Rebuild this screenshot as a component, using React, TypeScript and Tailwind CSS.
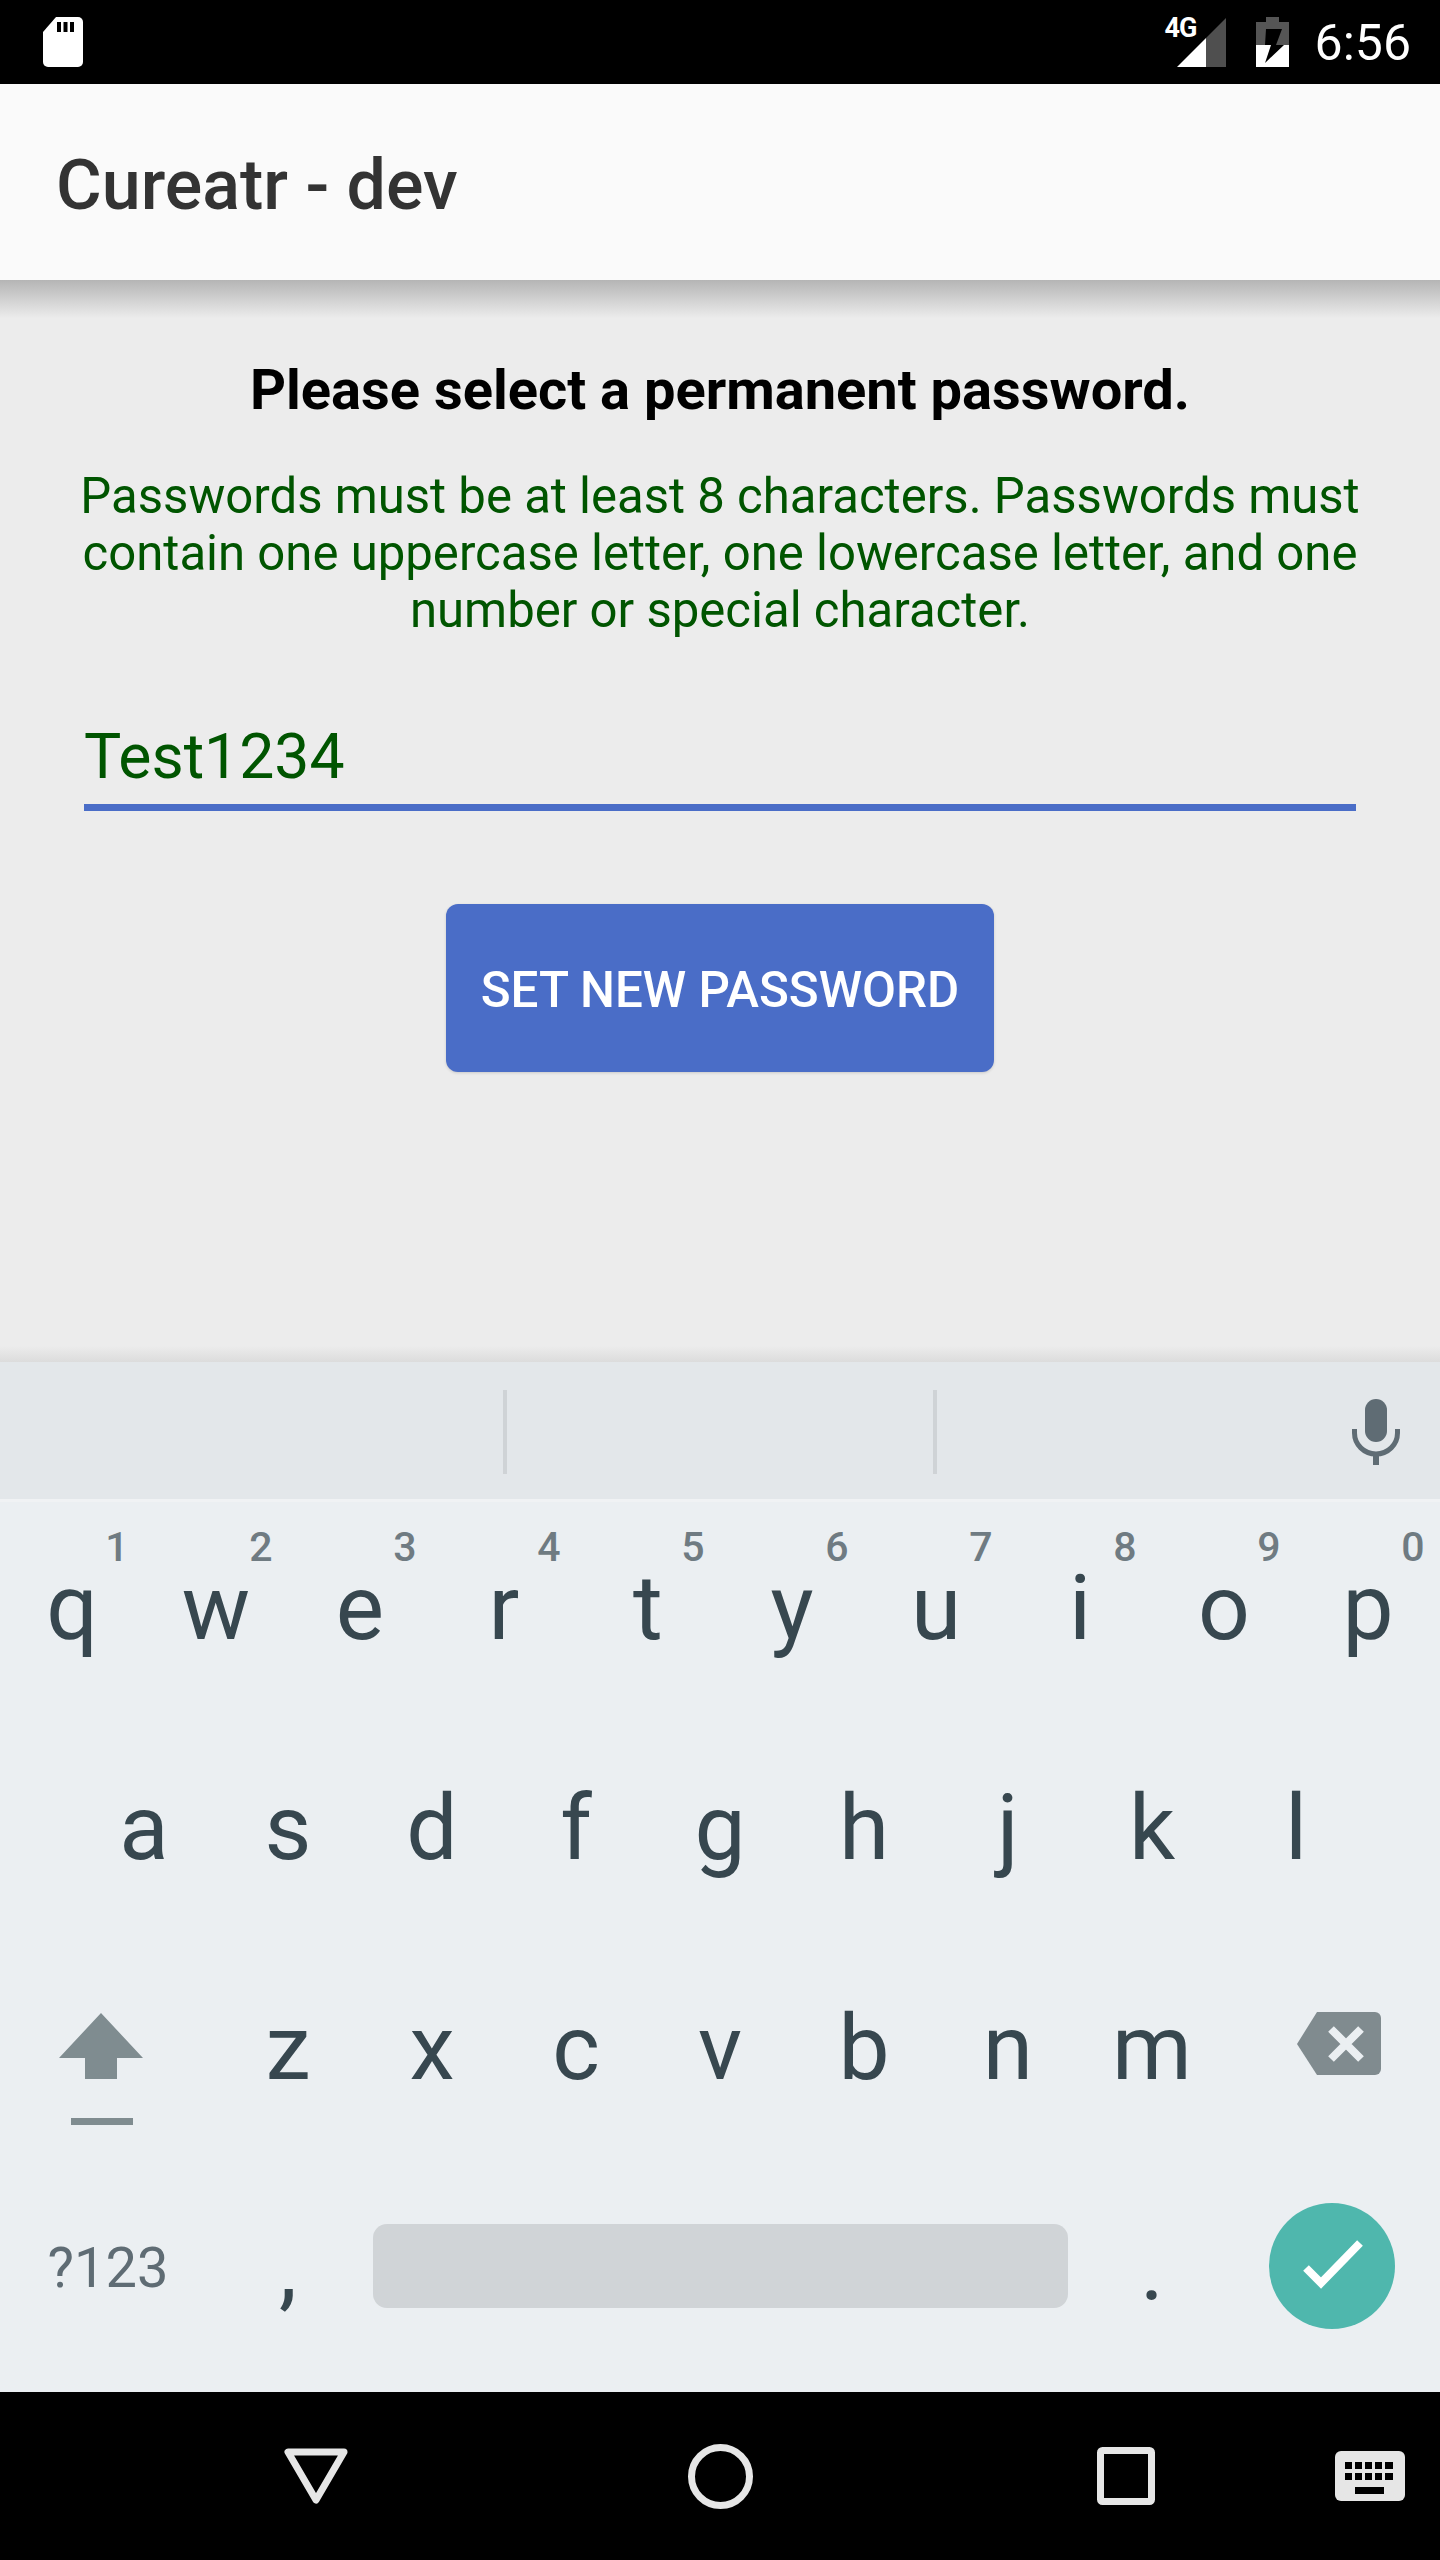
import React from 'react';

const topRow = ['q', 'w', 'e', 'r', 't', 'y', 'u', 'i', 'o', 'p'];
const hints = ['1', '2', '3', '4', '5', '6', '7', '8', '9', '0'];
const midRow = ['a', 's', 'd', 'f', 'g', 'h', 'j', 'k', 'l'];
const lowRow = ['z', 'x', 'c', 'v', 'b', 'n', 'm'];

const Key = ({ label, hint }: { label: string; hint?: string }) => (
  <div className="relative w-[144px] h-[220px] pb-[8px] flex items-center justify-center text-[91px] text-[#37474f]">
    {hint && (
      <span className="absolute left-[97px] top-[25px] w-[40px] text-center text-[41px] leading-none font-medium text-[#6f7b82]">
        {hint}
      </span>
    )}
    {label}
  </div>
);

const StatusBar = () => (
  <div className="h-[84px] shrink-0 bg-black flex items-center pl-[43px] pr-[29px] text-white">
    <svg width="40" height="50" viewBox="0 0 40 50">
      <path d="M13 0H35a5 5 0 0 1 5 5V45a5 5 0 0 1-5 5H5a5 5 0 0 1-5-5V15Z" fill="#fff" />
      <path d="M14 5h4v10h-4zM20.500 5h4v10h-4zM27 5h4v10h-4z" fill="#000" />
    </svg>
    <div className="ml-auto relative w-[49px] h-[49px]">
      <svg width="49" height="49" viewBox="0 0 49 49">
        <path d="M29 20 49 0V49H29Z" fill="#4f4f4f" />
        <path d="M29 20V49H0Z" fill="#fff" />
      </svg>
      <span className="absolute left-[-12px] top-[-3px] text-[27px] leading-[26px] font-bold tracking-[-1px]">4G</span>
    </div>
    <svg className="ml-[30px]" width="33" height="50" viewBox="0 0 33 50">
      <path d="M10 0H23V5H33V28H0V5H10Z" fill="#555" />
      <path d="M0 28H33V50H0Z" fill="#fff" />
      <path d="M10 12H26L20 28H28L9 46 15 28H9Z" fill="#000" />
    </svg>
    <span className="ml-[26px] pt-[2px] text-[50px] leading-none">6:56</span>
  </div>
);

const AppBar = () => (
  <div className="relative z-10 h-[196px] shrink-0 bg-[#fafafa] flex items-center pl-[56px] pt-[5px]">
    <h1 className="text-[70px] font-medium text-[#333333] leading-none">Cureatr - dev</h1>
    {/* drop shadow under the bar */}
    <div className="absolute left-0 right-0 top-full h-[38px] bg-linear-to-b from-[#b5b5b5] to-[#ececec]" />
  </div>
);

const PasswordForm = () => (
  <div className="flex-1 bg-[#ececec] flex flex-col items-center px-[84px] pt-[77px]">
    <p className="text-[56px] leading-[66px] font-bold text-black text-center whitespace-nowrap">
      Please select a permanent password.
    </p>
    <p className="mt-[45px] -mx-[8px] text-[49.100px] leading-[57px] text-[#005500] text-center">
      Passwords must be at least 8 characters. Passwords must contain one uppercase letter, one lowercase letter, and
      one number or special character.
    </p>
    <input
      readOnly
      value="Test1234"
      className="mt-[71px] w-full h-[101px] pb-[1px] bg-transparent border-b-[7px] border-[#4a6dc7] text-[62.500px] text-[#005500] outline-none"
    />
    <button className="mt-[93px] w-[548px] h-[168px] pt-[6px] rounded-[12px] bg-[#4a6dc7] text-white text-[49.300px] font-medium shadow-[0_1px_3px_rgba(0,0,0,0.15)]">
      SET NEW PASSWORD
    </button>
  </div>
);

const SuggestionStrip = () => (
  <div className="relative z-10 shrink-0 h-[143px] pt-[3px] border-t-[3px] border-b-[3px] border-[#f0f2f4] bg-[#e3e7ea] flex items-center">
    <div className="absolute left-0 right-0 bottom-full h-[16px] bg-linear-to-b from-[#ececec] to-[#dcdcdc]" />
    <div className="ml-[503px] w-[4px] h-[84px] bg-[#cfd3d6]" />
    <div className="ml-[426px] w-[4px] h-[84px] bg-[#cfd3d6]" />
    <svg className="ml-[415px]" width="48" height="66" viewBox="0 0 48 66">
      <rect x="13" y="0" width="22" height="43" rx="11" fill="#5f6c74" />
      <path d="M2.500 30v4a21.500 21 0 0 0 43 0v-4" fill="none" stroke="#5f6c74" strokeWidth="5" />
      <path d="M24 54v12" stroke="#5f6c74" strokeWidth="6" />
    </svg>
  </div>
);

const Keyboard = () => (
  <div className="h-[890px] shrink-0 bg-[#ebeff2]">
    <div className="flex">
      {topRow.map((k, i) => (
        <Key key={k} label={k} hint={hints[i]} />
      ))}
    </div>
    <div className="flex pl-[72px]">
      {midRow.map((k) => (
        <Key key={k} label={k} />
      ))}
    </div>
    <div className="flex h-[220px]">
      <div className="w-[216px] pt-[71px] pl-[59px] flex flex-col">
        <svg width="84" height="112" viewBox="0 0 84 112">
          <path d="M42 0 84 45H58V66H26V45H0Z" fill="#7f8c90" />
          <rect x="12" y="105" width="62" height="7" fill="#7f8c90" />
        </svg>
      </div>
      {lowRow.map((k) => (
        <Key key={k} label={k} />
      ))}
      <div className="w-[216px] pt-[70px] pl-[73px]">
        <svg width="84" height="63" viewBox="0 0 84 63">
          <path d="M20 0H78a6 6 0 0 1 6 6V57a6 6 0 0 1-6 6H20L0 32Z" fill="#808b8f" />
          <path d="M34 17 64 47M64 17 34 47" stroke="#ebeff2" strokeWidth="8" />
        </svg>
      </div>
    </div>
    <div className="flex h-[230px]">
      <div className="w-[216px] h-[220px] pb-[8px] flex items-center justify-center text-[56px] text-[#5f6c74]">?123</div>
      <Key label="," />
      <div className="w-[720px] pl-[13px] pr-[12px] pt-[62px]">
        <div className="h-[84px] rounded-[14px] bg-[#d0d4d7]" />
      </div>
      <Key label="." />
      <div className="w-[216px] pt-[41px] flex justify-center">
        <div className="w-[126px] h-[126px] rounded-full bg-[#4fb7ad] flex items-center justify-center">
          <svg width="126" height="126" viewBox="0 0 126 126">
            <path d="M37 65 52 80 91 40" fill="none" stroke="#fff" strokeWidth="8" />
          </svg>
        </div>
      </div>
    </div>
  </div>
);

const NavBar = () => (
  <div className="h-[168px] shrink-0 bg-black flex items-center pl-[284px]">
    <svg width="64" height="56" viewBox="0 0 64 56">
      <path d="M4 4H60L32 52Z" fill="none" stroke="#e6e6e6" strokeWidth="7" strokeLinejoin="round" />
    </svg>
    <svg className="ml-[340px]" width="65" height="65" viewBox="0 0 65 65">
      <circle cx="32.500" cy="32.500" r="29" fill="none" stroke="#e6e6e6" strokeWidth="7" />
    </svg>
    <svg className="ml-[344px]" width="58" height="58" viewBox="0 0 58 58">
      <rect x="3.500" y="3.500" width="51" height="51" rx="2" fill="none" stroke="#e6e6e6" strokeWidth="7" />
    </svg>
    <svg className="ml-[180px]" width="70" height="50" viewBox="0 0 70 50">
      <rect width="70" height="50" rx="6" fill="#e6e6e6" />
      <path
        d="M10 11h7v7h-7zM20 11h7v7h-7zM30 11h7v7h-7zM40 11h7v7h-7zM50 11h8v7h-8zM10 22h7v7h-7zM20 22h7v7h-7zM30 22h7v7h-7zM40 22h7v7h-7zM50 22h8v7h-8zM20 36h29v7H20z"
        fill="#000"
      />
    </svg>
  </div>
);

export default function App() {
  return (
    <div className="w-[1440px] h-[2560px] flex flex-col overflow-hidden font-['Roboto',sans-serif]">
      <StatusBar />
      <AppBar />
      <PasswordForm />
      <SuggestionStrip />
      <Keyboard />
      <NavBar />
    </div>
  );
}
